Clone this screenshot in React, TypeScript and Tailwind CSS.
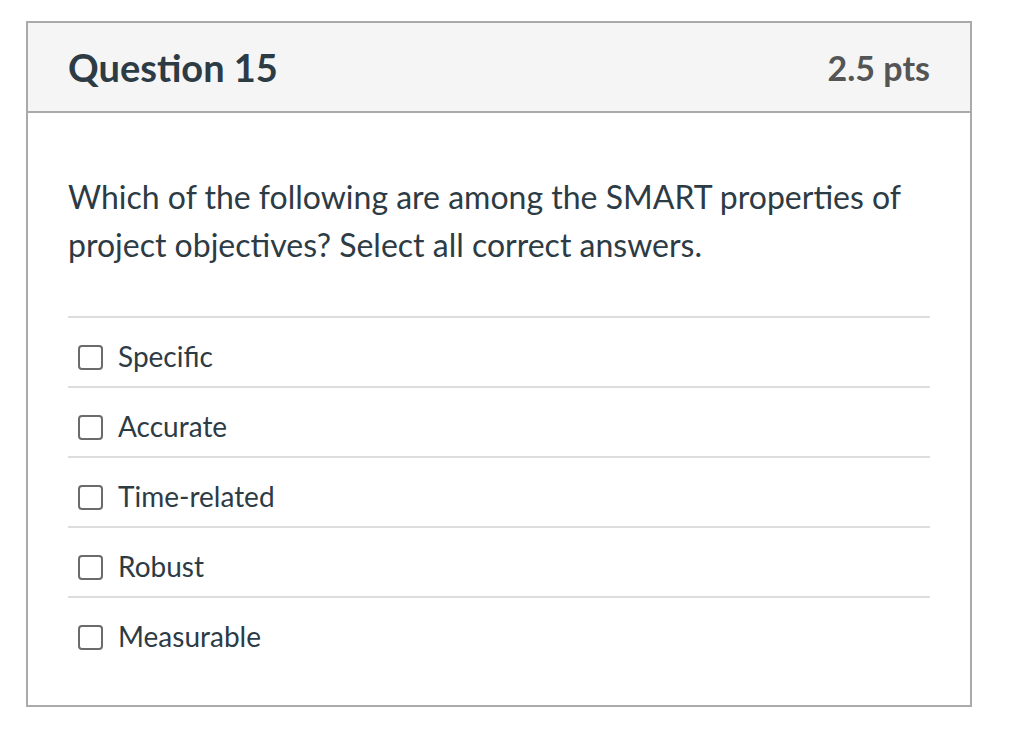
const answers = ['Specific', 'Accurate', 'Time-related', 'Robust', 'Measurable'];

export default function App() {
  return (
    <div className="h-[740px] w-full bg-white pl-[26px] pt-[21px]" style={{ fontFamily: 'Lato, "Noto Sans", sans-serif' }}>
      <div className="h-[686px] w-[946px] border-2 border-[#aaaaaa] bg-white">
        <div className="flex h-[90px] items-center justify-between border-b-2 border-[#aaaaaa] bg-[#f5f5f5] px-[40px]">
          <h2 className="text-[38px] font-bold text-[#2d3b45]">Question 15</h2>
          <span className="text-[34px] font-bold text-[#555555]">2.5 pts</span>
        </div>
        <div className="px-[40px] pt-[60px]">
          <p className="text-[32px] leading-[48px] text-[#2d3b45]">
            Which of the following are among the SMART properties of project objectives? Select all correct answers.
          </p>
          <div className="mt-[47px]">
            {answers.map(a => (
              <label key={a} className="flex h-[70px] items-center border-t-2 border-[#dddddd] pt-[7px]">
                <span className="ml-[10px] mt-[4px] h-[25px] w-[25px] shrink-0 rounded-[4px] border-2 border-[#6b6b6b] bg-white" />
                <span className="ml-[15px] text-[28px] leading-[40px] text-[#2d3b45]">{a}</span>
              </label>
            ))}
          </div>
        </div>
      </div>
    </div>
  );
}
